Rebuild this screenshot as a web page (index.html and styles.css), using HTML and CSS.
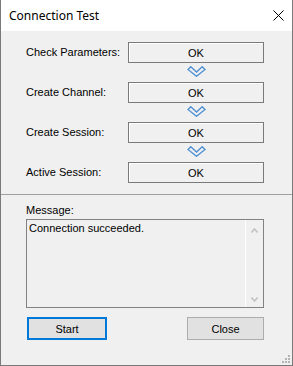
FILE: index.html
```html
<!DOCTYPE html>
<html lang="en">
<head>
    <meta charset="UTF-8">
    <title>Connection Test</title>
    <link rel="stylesheet" href="styles.css">
</head>
<body>
<div class="window">
    <!-- Title bar -->
    <div class="titlebar">
        <span class="title">Connection Test</span>
        <svg class="close-x" width="11" height="11" viewBox="0 0 11 11">
            <path d="M0.5 0.5 L10.5 10.5 M10.5 0.5 L0.5 10.5" stroke="#000" stroke-width="1" fill="none"/>
        </svg>
    </div>

    <!-- Steps -->
    <div class="steps">
        <div class="step"><span class="label">Check Parameters:</span><div class="status">OK</div></div>
        <div class="arrow">
            <svg width="19" height="11" viewBox="0 0 19 11"><polygon points="1,3.5 3.8,0.7 9.5,6 15.2,0.7 18,3.5 9.5,10.3" fill="none" stroke="#4d8fd3" stroke-width="1.3"/></svg>
        </div>
        <div class="step"><span class="label">Create Channel:</span><div class="status">OK</div></div>
        <div class="arrow">
            <svg width="19" height="11" viewBox="0 0 19 11"><polygon points="1,3.5 3.8,0.7 9.5,6 15.2,0.7 18,3.5 9.5,10.3" fill="none" stroke="#4d8fd3" stroke-width="1.3"/></svg>
        </div>
        <div class="step"><span class="label">Create Session:</span><div class="status">OK</div></div>
        <div class="arrow">
            <svg width="19" height="11" viewBox="0 0 19 11"><polygon points="1,3.5 3.8,0.7 9.5,6 15.2,0.7 18,3.5 9.5,10.3" fill="none" stroke="#4d8fd3" stroke-width="1.3"/></svg>
        </div>
        <div class="step"><span class="label">Active Session:</span><div class="status">OK</div></div>
    </div>

    <div class="separator"></div>

    <!-- Message + buttons -->
    <div class="message-area">
        <div class="label">Message:</div>
        <div class="message-box">
            <div class="message-text">Connection succeeded.</div>
            <div class="scrollbar">
                <svg width="7" height="5" viewBox="0 0 7 5"><path d="M0.5 4.5 L3.5 1 L6.5 4.5" stroke="#c2c2c2" stroke-width="1.6" fill="none"/></svg>
                <svg width="7" height="5" viewBox="0 0 7 5"><path d="M0.5 0.5 L3.5 4 L6.5 0.5" stroke="#c2c2c2" stroke-width="1.6" fill="none"/></svg>
            </div>
        </div>
        <div class="buttons">
            <button class="btn btn-default">Start</button>
            <button class="btn">Close</button>
        </div>
    </div>

    <!-- resize grip -->
    <svg class="grip" width="9" height="9" viewBox="0 0 9 9" fill="#b4b4b4">
        <rect x="6" y="0" width="2" height="2"/>
        <rect x="3" y="3" width="2" height="2"/><rect x="6" y="3" width="2" height="2"/>
        <rect x="0" y="6" width="2" height="2"/><rect x="3" y="6" width="2" height="2"/><rect x="6" y="6" width="2" height="2"/>
    </svg>
</div>
</body>
</html>
```

FILE: styles.css
```css
body {
    margin: 0;
    background: #f0f0f0;
}

.window {
    position: relative;
    width: 293px;
    height: 366px;
    box-sizing: border-box;
    border: 1px solid #7a7a7a;
    border-top: none;
    background: #f0f0f0;
    font-family: "Liberation Sans", Arial, sans-serif;
    font-size: 11px;
    color: #000;
}

.titlebar {
    height: 31px;
    background: #fff;
    display: flex;
    align-items: center;
    justify-content: space-between;
    padding: 0 8px 0 8px;
}

.title {
    font-family: "Noto Sans", "Open Sans", sans-serif;
    font-size: 12px;
    margin-top: -1px;
}

.close-x {
    margin-top: 0;
}

.steps {
    padding: 11px 28px 0 25px;
    display: flex;
    flex-direction: column;
}

.step {
    display: flex;
    align-items: center;
    height: 21px;
}

.label {
    width: 102px;
    line-height: 13px;
}

.status {
    width: 136px;
    height: 21px;
    box-sizing: border-box;
    border: 1px solid #7a7a7a;
    box-shadow: inset 1px 1px 0 #fff;
    display: flex;
    align-items: center;
    justify-content: center;
}

.arrow {
    height: 19px;
    padding-left: 102px;
    width: 136px;
    display: flex;
    justify-content: center;
    align-items: flex-start;
    box-sizing: content-box;
}

.arrow svg {
    margin-top: 3px;
}

.separator {
    height: 1px;
    background: #a0a0a0;
    margin-top: 11px;
}

.message-area {
    padding: 9px 28px 0 25px;
}

.message-box {
    margin-top: 2px;
    height: 89px;
    box-sizing: border-box;
    border: 1px solid #828282;
    display: flex;
}

.message-text {
    flex: 1;
    padding: 2px 0 0 2px;
    line-height: 13px;
}

.scrollbar {
    width: 17px;
    border-left: 1px solid #fff;
    display: flex;
    flex-direction: column;
    align-items: center;
    justify-content: space-between;
    padding: 8px 0 5px;
}

.buttons {
    display: flex;
    justify-content: space-between;
    margin-top: 9px;
}

.btn {
    height: 23px;
    width: 77px;
    box-sizing: border-box;
    background: #e1e1e1;
    border: 1px solid #adadad;
    font-family: "Liberation Sans", Arial, sans-serif;
    font-size: 11px;
    color: #000;
    padding: 0;
}

.btn-default {
    width: 80px;
    margin-left: 1px;
    border: 2px solid #0078d7;
}

.grip {
    position: absolute;
    right: 1px;
    bottom: 1px;
}
```
